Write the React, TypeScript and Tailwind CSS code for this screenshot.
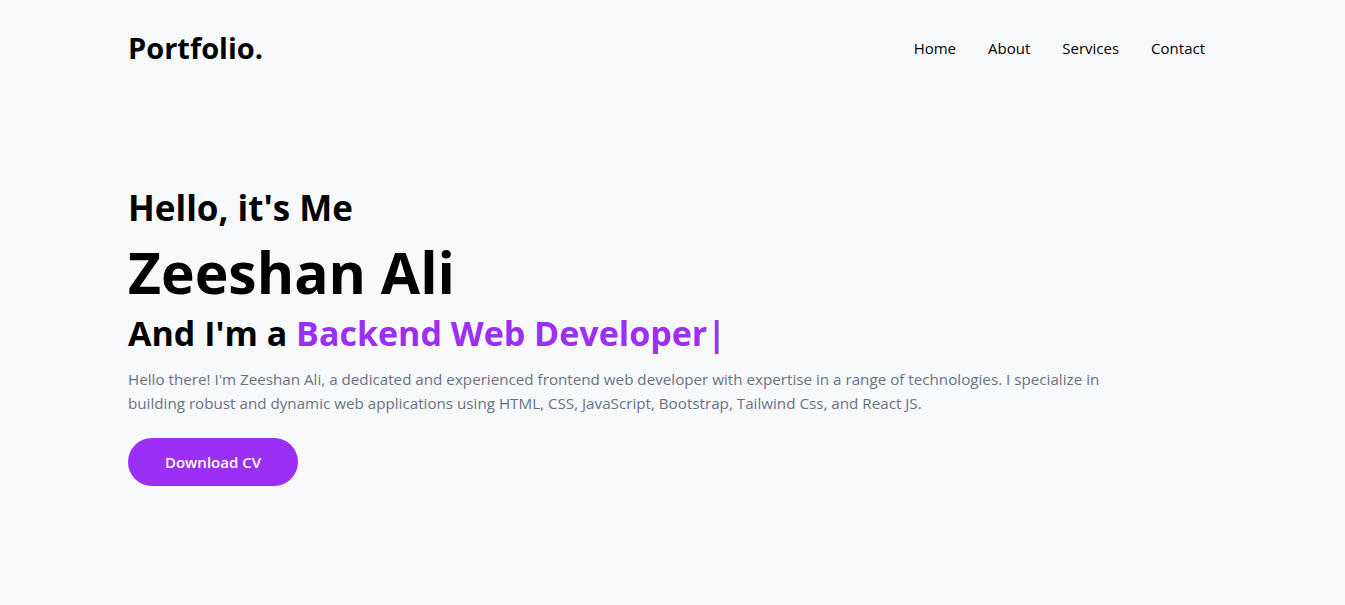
import React from 'react';

const links = ['Home', 'About', 'Services', 'Contact'];

const App = () => {
  return (
    <div className="min-h-screen bg-[#f8f9fb] font-['Open_Sans',sans-serif] text-black">
      <header className="flex items-center justify-between pl-[128px] pr-[140px] h-[96px]">
        <a className="text-[29px] font-bold">Portfolio.</a>
        <nav className="flex gap-8 text-[15px]">
          {links.map((l) => (
            <a key={l} className="text-black">{l}</a>
          ))}
        </nav>
      </header>

      <section className="pl-[128px] pr-[140px] pt-[90px]">
        <h3 className="text-[35px] font-bold leading-[44px]">Hello, it's Me</h3>
        <h1 className="mt-1 text-[57px] font-bold leading-[76px]">Zeeshan Ali</h1>
        <h3 className="text-[34px] font-bold leading-[46px]">
          And I'm a <span className="text-[#9b2ff5]">Backend Web Developer|</span>
        </h3>
        <p className="mt-[11px] max-w-[990px] text-[15.2px] leading-6 text-gray-500">
          Hello there! I'm Zeeshan Ali, a dedicated and experienced frontend web developer with expertise in a range of
          technologies. I specialize in building robust and dynamic web applications using HTML, CSS, JavaScript,
          Bootstrap, Tailwind Css, and React JS.
        </p>
        <button className="mt-[23px] h-12 w-[170px] rounded-full bg-[#9b2ff5] text-[15px] font-semibold text-white">
          Download CV
        </button>
      </section>
    </div>
  );
};

export default App;
